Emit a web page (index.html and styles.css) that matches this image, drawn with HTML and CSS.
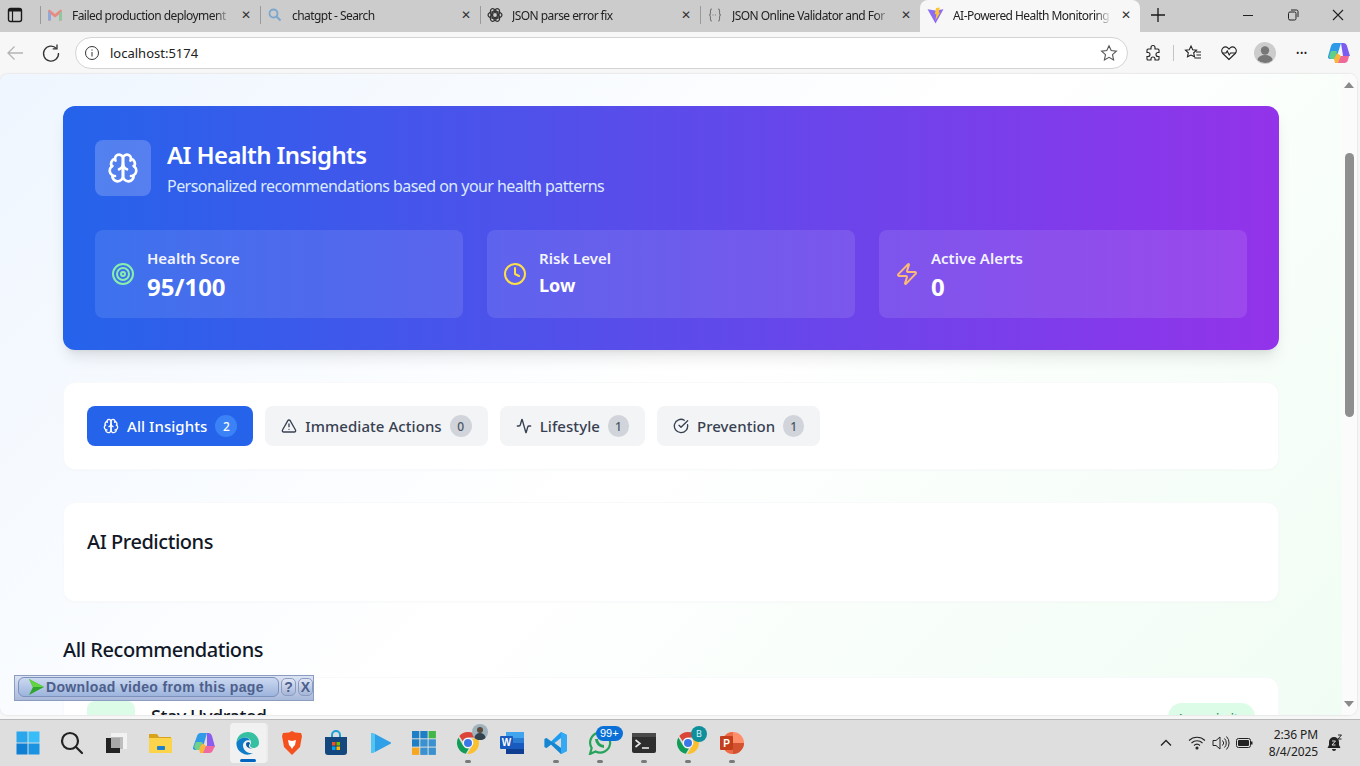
FILE: index.html
```html
<!DOCTYPE html>
<html lang="en">
<head>
    <meta charset="UTF-8">
    <meta name="viewport" content="width=device-width, initial-scale=1.0">
    <title>AI-Powered Health Monitoring</title>
    <link rel="stylesheet" href="styles.css">
</head>
<body>
    <svg class="defs" width="0" height="0">
        <symbol id="brain" viewBox="0 0 24 24">
            <path d="M12 5a3 3 0 1 0-5.997.125 4 4 0 0 0-2.526 5.77 4 4 0 0 0 .556 6.588A4 4 0 1 0 12 18Z"/>
            <path d="M12 5a3 3 0 1 1 5.997.125 4 4 0 0 1 2.526 5.77 4 4 0 0 1-.556 6.588A4 4 0 1 1 12 18Z"/>
            <path d="M15 13a4.5 4.5 0 0 1-3-4 4.5 4.5 0 0 1-3 4"/>
            <path d="M17.599 6.5a3 3 0 0 0 .399-1.375"/>
            <path d="M6.003 5.125A3 3 0 0 0 6.401 6.5"/>
            <path d="M3.477 10.896a4 4 0 0 1 .585-.396"/>
            <path d="M19.938 10.5a4 4 0 0 1 .585.396"/>
            <path d="M6 18a4 4 0 0 1-1.967-.516"/>
            <path d="M19.967 17.484A4 4 0 0 1 18 18"/>
        </symbol>
        <symbol id="chrome" viewBox="0 0 24 24">
            <path fill="#db4437" d="M12 1a11 11 0 0 1 9.5 5.5H12a5.5 5.5 0 0 0-5.2 3.7L3.3 5.1A11 11 0 0 1 12 1z"/>
            <path fill="#0f9d58" d="M2.4 6.6l4.6 8a5.5 5.5 0 0 0 5.9 2.8L9.8 22.8A11 11 0 0 1 2.4 6.6z"/>
            <path fill="#fbc02d" d="M22 7.5a11 11 0 0 1-10.7 15.5l4.7-7.9a5.5 5.5 0 0 0 .1-7.6z"/>
            <circle cx="12" cy="12" r="5" fill="#fff"/>
            <circle cx="12" cy="12" r="4" fill="#3b78e7"/>
        </symbol>
    </svg>

    <div class="tabstrip">
        <svg class="strip-icon" width="16" height="16" viewBox="0 0 16 16"><rect x="1.500" y="1.500" width="13" height="13" rx="2" fill="none" stroke="#1a1a1a" stroke-width="1.400"/><rect x="2" y="2" width="12" height="2.500" fill="#1a1a1a"/><path d="M5.500 4v10" stroke="#1a1a1a" stroke-width="1.200"/></svg>
        <div class="tab">
            <svg class="favicon" viewBox="0 0 16 16"><path d="M1 3.500v10h3V7.500l4 3 4-3v6h3v-10l-1.500-1L8 7 2.500 2.500z" fill="#ea8a80"/><path d="M1 3.500v10h3V7z" fill="#90a9d8"/><path d="M12 7v6.500h3V3.500z" fill="#8fc79f"/></svg>
            <span class="tab-title">Failed production deployment</span>
            <span class="tab-close">✕</span>
        </div>
        <div class="tab">
            <svg class="favicon" viewBox="0 0 16 16"><circle cx="6.500" cy="6.500" r="4" fill="none" stroke="#7ba7cf" stroke-width="1.800"/><path d="M9.500 9.500L13.500 13.500" stroke="#7ba7cf" stroke-width="2"/></svg>
            <span class="tab-title">chatgpt - Search</span>
            <span class="tab-close">✕</span>
        </div>
        <div class="tab">
            <svg class="favicon" viewBox="0 0 16 16" fill="none" stroke="#333" stroke-width="1.200"><circle cx="8" cy="8" r="2.500"/><ellipse cx="8" cy="8" rx="7" ry="3.500"/><ellipse cx="8" cy="8" rx="7" ry="3.500" transform="rotate(60 8 8)"/><ellipse cx="8" cy="8" rx="7" ry="3.500" transform="rotate(120 8 8)"/></svg>
            <span class="tab-title">JSON parse error fix</span>
            <span class="tab-close">✕</span>
        </div>
        <div class="tab">
            <svg class="favicon" viewBox="0 0 16 16" fill="none" stroke="#777" stroke-width="1.100"><path d="M5 2C3 2 3.500 4 3.500 6S2 8 2 8s1.500 0 1.500 2S3 14 5 14M11 2c2 0 1.500 2 1.500 4S14 8 14 8s-1.500 0-1.500 2 .5 4-1.500 4"/><path d="M5.500 8h5" stroke-dasharray="1 1.500"/></svg>
            <span class="tab-title">JSON Online Validator and For</span>
            <span class="tab-close">✕</span>
        </div>
        <div class="tab tab-active">
            <svg class="favicon favicon-big" viewBox="0 0 16 16"><path d="M0.500 2L8 15.500 15.500 2 8 3.200z" fill="#8d6cf5"/><path d="M8.500 1l3.500-.5-1 5 1.500-.5L8 12.500l.8-6-1.500.4z" fill="#ffc52e"/></svg>
            <span class="tab-title">AI-Powered Health Monitoring</span>
            <span class="tab-close tab-close-dark">✕</span>
        </div>
        <svg class="new-tab" width="16" height="16" viewBox="0 0 16 16"><path d="M8 1v14M1 8h14" stroke="#1a1a1a" stroke-width="1.300"/></svg>
        <div class="window-controls">
            <svg width="12" height="12" viewBox="0 0 12 12"><path d="M1 6.500h10" stroke="#222"/></svg>
            <svg width="12" height="12" viewBox="0 0 12 12" fill="none" stroke="#222"><rect x="1.500" y="3" width="7.500" height="8" rx="1.500"/><path d="M4 1h5.500a1.500 1.500 0 0 1 1.500 1.500V8"/></svg>
            <svg width="12" height="12" viewBox="0 0 12 12"><path d="M1 1l10 10M11 1L1 11" stroke="#222" stroke-width="1.100"/></svg>
        </div>
    </div>

    <div class="toolbar">
        <svg class="nav-icon" viewBox="0 0 20 20" fill="none" stroke="#b4b4b4" stroke-width="1.300"><path d="M18 10H3M9.500 3.500L3 10l6.500 6.500"/></svg>
        <svg class="nav-icon reload" viewBox="0 0 20 20" fill="none" stroke="#333" stroke-width="1.300"><path d="M15.500 5.500A7.500 7.500 0 1 0 17.500 10"/><path d="M16 1.500v4.300h-4.300"/></svg>
        <div class="address-bar">
            <svg width="16" height="16" viewBox="0 0 16 16" fill="none" stroke="#333"><circle cx="8" cy="8" r="6.500"/><path d="M8 7v4.500M8 4.500v1.200"/></svg>
            <span class="url">localhost:5174</span>
            <svg class="star" width="18" height="18" viewBox="0 0 18 18" fill="none" stroke="#555" stroke-width="1.100"><path d="M9 1.800l2.200 4.800 5.200.6-3.900 3.500 1.100 5.200L9 13.300l-4.600 2.600 1.100-5.200-3.900-3.500 5.200-.6z"/></svg>
        </div>
        <div class="toolbar-icons">
            <svg width="18" height="18" viewBox="0 0 18 18" fill="none" stroke="#222" stroke-width="1.100"><path d="M7 3.500a2 2 0 0 1 4 0V5h3a1 1 0 0 1 1 1v2.500h-1a2 2 0 0 0 0 4h1V15a1 1 0 0 1-1 1h-3v-1a2 2 0 0 0-4 0v1H4a1 1 0 0 1-1-1v-2.500h1a2 2 0 0 0 0-4H3V6a1 1 0 0 1 1-1h3z"/></svg>
            <span class="toolbar-sep"></span>
            <svg class="after-sep" width="18" height="18" viewBox="0 0 18 18" fill="none" stroke="#222" stroke-width="1.100"><path d="M7 2l1.700 3.800 3.800.4-2.800 2.600.8 4L7 11 3.500 12.800l.8-4L1.500 6.200l3.800-.4zM12 8h5M12.500 11h4.500M10.500 14h6.500"/></svg>
            <svg width="18" height="18" viewBox="0 0 18 18" fill="none" stroke="#222" stroke-width="1.100"><path d="M9 15.500L2.800 9.500a3.700 3.700 0 0 1 0-5.300 3.800 3.800 0 0 1 5.300 0l.9.900.900-.9a3.800 3.800 0 0 1 5.300 0 3.700 3.700 0 0 1 0 5.300z"/><path d="M2.500 9h3.500l1.200-2 2 4 1.300-2h5"/></svg>
            <svg class="avatar" width="22" height="22" viewBox="0 0 22 22"><circle cx="11" cy="11" r="11" fill="#ccc"/><circle cx="11" cy="8.500" r="4.200" fill="#777"/><path d="M3.500 18a7.500 5 0 0 1 15 0 11 11 0 0 1-15 0z" fill="#777"/></svg>
            <span class="dots">•••</span>
            <svg class="copilot" width="24" height="24" viewBox="0 0 24 24"><path d="M7 2h7l-4 13a4 4 0 0 1-4 3H3a2 2 0 0 1-2-2.500L4 5a4 4 0 0 1 3-3z" fill="#2f9be8"/><path d="M14 2h2a4 4 0 0 1 4 3l3 10h-7z" fill="#7c5cf0"/><path d="M9 22h8a4 4 0 0 0 4-3l1-4h-9l-2 5z" fill="#f0679a"/><path d="M2 16l2-6h6l-2 8H4z" fill="#5ed08b"/><path d="M7 18l3-6 4 3-3 7H8z" fill="#f6b73c"/></svg>
        </div>
    </div>

    <div class="viewport">
        <main class="page">
            <div class="container">
                <section class="hero">
                    <div class="hero-head">
                        <div class="hero-icon">
                            <svg class="lucide" width="32" height="32"><use href="#brain"/></svg>
                        </div>
                        <div>
                            <h1>AI Health Insights</h1>
                            <p>Personalized recommendations based on your health patterns</p>
                        </div>
                    </div>
                    <div class="stats">
                        <div class="stat">
                            <svg class="lucide stat-green" width="24" height="24" viewBox="0 0 24 24"><circle cx="12" cy="12" r="10"/><circle cx="12" cy="12" r="6"/><circle cx="12" cy="12" r="2"/></svg>
                            <div>
                                <div class="stat-label">Health Score</div>
                                <div class="stat-value">95/100</div>
                            </div>
                        </div>
                        <div class="stat">
                            <svg class="lucide stat-yellow" width="24" height="24" viewBox="0 0 24 24"><circle cx="12" cy="12" r="10"/><path d="M12 6v6l4 2"/></svg>
                            <div>
                                <div class="stat-label">Risk Level</div>
                                <div class="stat-value stat-value-small">Low</div>
                            </div>
                        </div>
                        <div class="stat">
                            <svg class="lucide stat-orange" width="24" height="24" viewBox="0 0 24 24"><path d="M4 14a1 1 0 0 1-.78-1.630l9.900-10.200a.5.5 0 0 1 .86.46l-1.920 6.020A1 1 0 0 0 13 10h7a1 1 0 0 1 .78 1.630l-9.900 10.200a.5.5 0 0 1-.86-.46l1.920-6.020A1 1 0 0 0 11 14z"/></svg>
                            <div>
                                <div class="stat-label">Active Alerts</div>
                                <div class="stat-value">0</div>
                            </div>
                        </div>
                    </div>
                </section>

                <section class="card filters">
                    <button class="filter filter-active">
                        <svg class="lucide" width="16" height="16"><use href="#brain"/></svg>
                        All Insights
                        <span class="count">2</span>
                    </button>
                    <button class="filter">
                        <svg class="lucide" width="16" height="16" viewBox="0 0 24 24"><path d="m21.730 18-8-14a2 2 0 0 0-3.480 0l-8 14A2 2 0 0 0 4 21h16a2 2 0 0 0 1.730-3"/><path d="M12 9v4"/><path d="M12 17h.01"/></svg>
                        Immediate Actions
                        <span class="count">0</span>
                    </button>
                    <button class="filter">
                        <svg class="lucide" width="16" height="16" viewBox="0 0 24 24"><path d="M22 12h-2.480a2 2 0 0 0-1.930 1.460l-2.350 8.360a.25.25 0 0 1-.48 0L9.240 2.180a.25.25 0 0 0-.48 0l-2.350 8.360A2 2 0 0 1 4.490 12H2"/></svg>
                        Lifestyle
                        <span class="count count-one">1</span>
                    </button>
                    <button class="filter">
                        <svg class="lucide" width="16" height="16" viewBox="0 0 24 24"><path d="M21.801 10A10 10 0 1 1 17 3.335"/><path d="m9 11 3 3L22 4"/></svg>
                        Prevention
                        <span class="count count-one">1</span>
                    </button>
                </section>

                <section class="card predictions">
                    <h2>AI Predictions</h2>
                </section>

                <h2 class="section-title">All Recommendations</h2>

                <section class="card recommendation">
                    <div class="rec-icon"></div>
                    <h3>Stay Hydrated</h3>
                    <span class="priority">Low priority</span>
                </section>
            </div>
        </main>
        <div class="scrollbar">
            <span class="arrow-up"></span>
            <span class="thumb"></span>
            <span class="arrow-down"></span>
        </div>

        <div class="video-bar">
            <div class="video-btn">
                <svg width="17" height="16" viewBox="0 0 17 16"><path d="M1 0l15 8-15 8 4-8z" fill="#2fa52f"/><path d="M1 0l15 8H5z" fill="#62d43f"/></svg>
                Download video from this page
            </div>
            <span class="video-mini">?</span>
            <span class="video-mini">X</span>
        </div>
    </div>

    <footer class="taskbar">
        <div class="task-apps">
            <div class="task-app">
                <svg width="24" height="24" viewBox="0 0 24 24"><rect x="0.500" y="0.500" width="11" height="11" fill="#2aa6ec"/><rect x="12.500" y="0.500" width="11" height="11" fill="#38bdf8"/><rect x="0.500" y="12.500" width="11" height="11" fill="#0f7fd4"/><rect x="12.500" y="12.500" width="11" height="11" fill="#1a93e2"/></svg>
            </div>
            <div class="task-app">
                <svg width="24" height="24" viewBox="0 0 24 24" fill="none" stroke="#222" stroke-width="2.200"><circle cx="10" cy="10" r="8"/><path d="M16 16l6 6" stroke-linecap="round"/></svg>
            </div>
            <div class="task-app">
                <svg width="24" height="24" viewBox="0 0 24 24"><rect x="7" y="2" width="16" height="16" fill="#f2f2f2"/><rect x="7" y="6" width="12" height="12" fill="#bdbdbd"/><rect x="2" y="7" width="14" height="15" fill="#222"/><path d="M7 7h9v10H7z" fill="#a8a8a8"/></svg>
            </div>
            <div class="task-app">
                <svg width="24" height="24" viewBox="0 0 24 24"><path d="M1 3h8l2 3h12v5H1z" fill="#d9a21b"/><rect x="1" y="7" width="23" height="15" fill="#fbd44c"/><rect x="9" y="15" width="8" height="4" rx="1" fill="#1c7fd0"/></svg>
            </div>
            <div class="task-app">
                <svg width="24" height="24" viewBox="0 0 24 24"><path d="M8 2h7l-4 14a4 4 0 0 1-4 3H3a2 2 0 0 1-2-2.500L5 5a4 4 0 0 1 3-3z" fill="#2f9be8"/><path d="M15 2h2a4 4 0 0 1 3 3l3 11h-8z" fill="#8b5cf0"/><path d="M9 22h8a4 4 0 0 0 4-3l2-4H13l-2 5z" fill="#ef6aa0"/><path d="M2 16l2-5h6l-2 8H4z" fill="#6fd18a"/><path d="M7 18l3-6 4 3-3 7H8z" fill="#f6b73c"/></svg>
            </div>
            <div class="task-app task-app-open">
                <svg width="24" height="24" viewBox="0 0 24 24"><path d="M12 1a11 11 0 0 1 11 11c0 3-2.500 5-5.500 5-2 0-3.500-1-3.500-2.500 0-1 1-1.500 1-3 0-3-3-5-6-5-4 0-7 2.500-8.500 5A11 11 0 0 1 12 1z" fill="#35c1a1"/><path d="M.5 11.500C2 9 5 6.500 9 6.500c2 0 4 1 5 3-3-1-7 1-7 5 0 4 4 8.500 10 7.500a11 11 0 0 1-16.500-10.500z" fill="#0f7cc9"/><path d="M10 13c0 3 3 5 7 4.500-3 0-4-1-4-2.500s1-2 1-3c-1-2-4-1-4 1z" fill="#0b5aa6"/></svg>
                <span class="task-running"></span>
            </div>
            <div class="task-app">
                <svg width="24" height="26" viewBox="0 0 24 26"><path d="M12 1l3 1.500 6 .500 1 3-2 11-8 8-8-8-2-11 1-3 6-.500z" fill="#f4511e"/><path d="M8 10l4 1 4-1-1 5-1.500 1.500L12 19l-1.500-2.500L9 15z" fill="#fff"/></svg>
            </div>
            <div class="task-app">
                <svg width="24" height="26" viewBox="0 0 24 26"><path d="M8 7V5a4 4 0 0 1 8 0v2" fill="none" stroke="#18a0d7" stroke-width="2"/><path d="M1 7h22v15a3 3 0 0 1-3 3H4a3 3 0 0 1-3-3z" fill="#14477e"/><rect x="8" y="12" width="3.500" height="3.500" fill="#f25022"/><rect x="12.500" y="12" width="3.500" height="3.500" fill="#7fba00"/><rect x="8" y="16.500" width="3.500" height="3.500" fill="#00a4ef"/><rect x="12.500" y="16.500" width="3.500" height="3.500" fill="#ffb900"/></svg>
            </div>
            <div class="task-app">
                <svg width="24" height="24" viewBox="0 0 24 24"><path d="M3 2l4 1 15 8a1 1 0 0 1 0 2L7 21l-4 1z" fill="#2f9fe8"/><path d="M3 2l4 1v18l-4 1z" fill="#52c6f2"/></svg>
            </div>
            <div class="task-app">
                <svg width="24" height="24" viewBox="0 0 24 24"><rect width="7.300" height="7.300" fill="#1f7fc4"/><rect x="8.300" width="7.300" height="7.300" fill="#1f7fc4"/><rect x="16.600" width="7.300" height="7.300" fill="#43b649"/><rect y="8.300" width="7.300" height="7.300" fill="#1f7fc4"/><rect x="8.300" y="8.300" width="7.300" height="7.300" fill="#3a91d0"/><rect x="16.600" y="8.300" width="7.300" height="7.300" fill="#3a91d0"/><rect y="16.600" width="7.300" height="7.300" fill="#f5a623"/><rect x="8.300" y="16.600" width="7.300" height="7.300" fill="#3a91d0"/><rect x="16.600" y="16.600" width="7.300" height="7.300" fill="#3a91d0"/></svg>
            </div>
            <div class="task-app">
                <svg width="24" height="24"><use href="#chrome"/></svg>
                <svg class="task-badge-photo" width="16" height="16" viewBox="0 0 16 16"><circle cx="8" cy="8" r="8" fill="#9fb3bf"/><circle cx="8" cy="6" r="3" fill="#5d4a3c"/><path d="M2.500 14a5.500 5 0 0 1 11 0 8 8 0 0 1-11 0z" fill="#33424f"/></svg>
                <span class="task-dot"></span>
            </div>
            <div class="task-app">
                <svg width="24" height="24" viewBox="0 0 24 24"><rect x="6" y="1" width="18" height="22" rx="1" fill="#2b7cd3"/><rect x="6" y="1" width="18" height="6" fill="#41a5ee"/><rect x="6" y="12" width="18" height="6" fill="#185abd"/><rect x="6" y="18" width="18" height="5" fill="#103f91"/><rect y="5" width="13" height="13" rx="1" fill="#185abd"/><text class="word-w" x="6.500" y="15" text-anchor="middle">W</text></svg>
            </div>
            <div class="task-app">
                <svg width="24" height="24" viewBox="0 0 24 24"><path d="M17 1l6 3v16l-6 3-10-9.500L2.500 17 .5 16v-8l2-1L7 10.500z" fill="#1f9cf0"/><path d="M17 7l-6.500 5 6.500 5z" fill="#d9d9d9"/><path d="M17 1l6 3v16l-6 3z" fill="#35a9f4"/><path d="M.5 8l2-1L17 17v6L7 13.500 2.500 17 .5 16z" fill="#0f74ba" opacity=".55"/></svg>
                <span class="task-dot"></span>
            </div>
            <div class="task-app">
                <svg width="24" height="24" viewBox="0 0 24 24" fill="none" stroke="#25a35a" stroke-width="2.200"><path d="M2 23l1.700-6A10 10 0 1 1 7.500 20.500z"/><path d="M8.500 8c0 4 3.500 7.500 7.500 7.500" stroke-width="3"/></svg>
                <span class="task-badge">99+</span>
                <span class="task-dot"></span>
            </div>
            <div class="task-app">
                <svg width="24" height="20" viewBox="0 0 24 20"><rect width="24" height="20" rx="2" fill="#2e2e2e"/><rect width="24" height="4" fill="#4a4a4a"/><path d="M3.500 7l4.500 3.500-4.500 3.500" fill="none" stroke="#e5e5e5" stroke-width="1.600"/><path d="M10 15h7" stroke="#e5e5e5" stroke-width="1.600"/></svg>
                <span class="task-dot"></span>
            </div>
            <div class="task-app">
                <svg width="24" height="24"><use href="#chrome"/></svg>
                <span class="task-badge-b">B</span>
                <span class="task-dot"></span>
            </div>
            <div class="task-app">
                <svg width="24" height="24" viewBox="0 0 24 24"><circle cx="13" cy="12" r="11" fill="#ff8f6b"/><path d="M13 12h11a11 11 0 0 1-11 11z" fill="#d35230"/><path d="M13 1v22a11 11 0 0 1-9-5V6a11 11 0 0 1 9-5z" fill="#ed6c47"/><rect y="5" width="13" height="14" rx="1" fill="#c43e1c"/><text class="word-w" x="6.500" y="16" text-anchor="middle">P</text></svg>
                <span class="task-dot"></span>
            </div>
        </div>
        <div class="tray">
            <svg class="tray-caret" width="14" height="14" viewBox="0 0 14 14" fill="none" stroke="#222" stroke-width="1.300"><path d="M2 9.500l5-5 5 5"/></svg>
            <svg width="18" height="16" viewBox="0 0 18 16" fill="none" stroke="#222" stroke-width="1.100"><path d="M1 5.500a11.500 11.500 0 0 1 16 0M3.500 8a8 8 0 0 1 11 0M6 10.500a4.500 4.500 0 0 1 6 0"/><circle cx="9" cy="13" r="1" fill="#222"/></svg>
            <svg width="18" height="16" viewBox="0 0 18 16" fill="none" stroke="#222" stroke-width="1"><path d="M1 5.500h3L8 2v12L4 10.500H1zM10.500 5.500a3.500 3.500 0 0 1 0 5M12.500 3.500a6.500 6.500 0 0 1 0 9M14.500 1.500a9.500 9.500 0 0 1 0 13"/></svg>
            <svg width="17" height="12" viewBox="0 0 17 12"><rect x="0.500" y="1.500" width="14" height="9" rx="2" fill="none" stroke="#222"/><rect x="2" y="3" width="11" height="6" rx="1" fill="#222"/><rect x="15" y="4.500" width="1.500" height="3" fill="#222"/></svg>
            <div class="clock">
                <div>2:36 PM</div>
                <div>8/4/2025</div>
            </div>
            <svg class="bell" width="16" height="18" viewBox="0 0 16 18"><path d="M7 3a5 5 0 0 0-5 5v3l-1.500 3h13L12 11V8a5 5 0 0 0-5-5zM5 15a2 2 0 0 0 4 0z" fill="#222"/><path d="M5 7h3.500L5 11h3.500" fill="none" stroke="#ddd"/><path d="M11 1h3.500L11 5h3.500" fill="none" stroke="#222"/></svg>
        </div>
    </footer>
</body>
</html>
```

FILE: styles.css
```css
* {
    box-sizing: border-box;
}

body {
    margin: 0;
    width: 1360px;
    height: 766px;
    overflow: hidden;
    display: flex;
    flex-direction: column;
    font-family: "Noto Sans", "Open Sans", sans-serif;
    background: #f7f7f7;
    color: #111827;
}

.defs {
    position: absolute;
}

/* browser tabs */
.tabstrip {
    height: 32px;
    flex: none;
    display: flex;
    align-items: center;
    background: #cccccc;
    font-size: 12px;
    color: #222;
}

.strip-icon {
    margin: 0 17px 2px 7px;
    flex: none;
}

.tab {
    width: 220px;
    height: 32px;
    flex: none;
    display: flex;
    align-items: center;
    gap: 9px;
    padding: 0 8px 2px 7px;
    position: relative;
}

.tab::before {
    content: "";
    position: absolute;
    left: 0;
    top: 6px;
    bottom: 8px;
    border-left: 1px solid #9a9a9a;
}

.tab-active {
    background: #f7f7f7;
    border-radius: 8px 8px 0 0;
}

.tab-active::before {
    display: none;
}

.favicon {
    width: 16px;
    height: 16px;
    flex: none;
}

.favicon-big {
    width: 17px;
    height: 17px;
}

.tab-title {
    flex: 1;
    white-space: nowrap;
    overflow: hidden;
    letter-spacing: -0.55px;
    -webkit-mask-image: linear-gradient(to right, #000 90%, transparent);
    mask-image: linear-gradient(to right, #000 90%, transparent);
}

.tab-close {
    width: 12px;
    font-size: 12px;
    text-align: center;
    color: #333;
    flex: none;
    font-family: "DejaVu Sans", sans-serif;
}

.new-tab {
    margin: 0 0 2px 10px;
    flex: none;
}

.window-controls {
    margin: 0 0 2px auto;
    display: flex;
    gap: 33px;
    padding-right: 16px;
}

/* address bar row */
.toolbar {
    height: 42px;
    flex: none;
    display: flex;
    align-items: center;
    padding: 0 8px 1px 5px;
    background: #f7f7f7;
}

.nav-icon {
    width: 20px;
    height: 20px;
    flex: none;
}

.reload {
    margin-left: 16px;
}

.address-bar {
    width: 1053px;
    height: 32px;
    margin-left: 14px;
    display: flex;
    align-items: center;
    gap: 10px;
    padding: 0 9px 0 8px;
    background: #fff;
    border: 1px solid #d4d4d4;
    border-radius: 16px;
}

.url {
    font-size: 13px;
    color: #222;
}

.star {
    margin-left: auto;
}

.toolbar-icons {
    display: flex;
    align-items: center;
    margin-left: 16px;
}

.toolbar-sep {
    height: 16px;
    border-left: 1px solid #c4c4c4;
    margin: 0 10px 0 11px;
}

.toolbar-icons svg + svg {
    margin-left: 18px;
}

.toolbar-icons .avatar {
    margin-left: 16px;
}

.dots {
    margin-left: 20px;
    font-size: 9px;
    letter-spacing: 0.5px;
    color: #222;
    width: 21px;
}

.copilot {
    margin-left: 10px;
}

/* page area */
.viewport {
    flex: none;
    width: 1357px;
    height: 641px;
    display: flex;
    position: relative;
    overflow: hidden;
    border-radius: 8px;
    background: linear-gradient(135deg, #eff6ff 0%, #ffffff 50%, #f0fdf4 100%);
    box-shadow: 0 0 2px rgba(0, 0, 0, 0.18);
}

.page {
    flex: 1;
    min-width: 0;
    overflow: hidden;
}

.container {
    max-width: 1280px;
    margin: 0 auto;
    padding: 32px;
}

.hero {
    padding: 34px 32px 32px;
    border-radius: 12px;
    color: #fff;
    background: linear-gradient(to right, #2563eb, #9333ea);
    box-shadow: 0 10px 15px -3px rgba(0, 0, 0, 0.1), 0 4px 6px -4px rgba(0, 0, 0, 0.1);
}

.hero-head {
    height: 56px;
    display: flex;
    align-items: center;
    gap: 16px;
    margin-bottom: 34px;
}

.hero-icon {
    width: 56px;
    height: 56px;
    display: flex;
    align-items: center;
    justify-content: center;
    border-radius: 8px;
    background: rgba(255, 255, 255, 0.2);
}

.lucide {
    fill: none;
    stroke: currentColor;
    stroke-width: 2;
    stroke-linecap: round;
    stroke-linejoin: round;
    flex: none;
}

h1 {
    margin: 0;
    font-size: 24px;
    line-height: 32px;
    font-weight: 600;
    letter-spacing: -0.6px;
}

.hero p {
    margin: 3px 0 0;
    font-size: 16px;
    line-height: 24px;
    letter-spacing: -0.55px;
    color: #dbeafe;
}

.stats {
    display: grid;
    grid-template-columns: repeat(3, 1fr);
    gap: 24px;
}

.stat {
    height: 88px;
    display: flex;
    align-items: center;
    gap: 12px;
    padding: 16px;
    border-radius: 8px;
    background: rgba(255, 255, 255, 0.1);
}

.stat-green {
    color: #86efac;
}

.stat-yellow {
    color: #fde047;
}

.stat-orange {
    color: #fdba74;
}

.stat-label {
    font-size: 15px;
    line-height: 20px;
    font-weight: 600;
    color: #f3f4ff;
}

.stat-value {
    margin: 3px 0 -3px;
    font-size: 24px;
    line-height: 32px;
    font-weight: 700;
}

.stat-value-small {
    margin: 1px 0 -1px;
    font-size: 18px;
}

.card {
    background: #fff;
    border: 1px solid #f8f9fb;
    border-radius: 12px;
    box-shadow: 0 1px 2px rgba(0, 0, 0, 0.02);
}

.filters {
    margin-top: 32px;
    padding: 23px;
    display: flex;
    gap: 12px;
}

.filter {
    height: 40px;
    display: flex;
    align-items: center;
    gap: 8px;
    padding: 0 16px;
    border: none;
    border-radius: 8px;
    background: #f3f4f6;
    color: #374151;
    font-family: inherit;
    font-size: 15px;
    font-weight: 500;
    letter-spacing: 0.06px;
}

.filter-active {
    background: #2563eb;
    color: #fff;
}

.count {
    width: 22px;
    height: 22px;
    display: flex;
    align-items: center;
    justify-content: center;
    border-radius: 11px;
    background: #d1d5db;
    color: #4b5563;
    font-size: 12px;
}

.count-one {
    width: 21px;
}

.filter-active .count {
    background: #3b82f6;
    color: #fff;
}

.predictions {
    margin-top: 32px;
    height: 100px;
    padding: 25px 23px;
}

h2 {
    margin: 0;
    font-size: 20px;
    line-height: 28px;
    font-weight: 500;
    letter-spacing: -0.45px;
}

.section-title {
    margin-top: 34px;
}

.recommendation {
    margin-top: 13px;
    height: 120px;
    padding: 23px;
    display: flex;
    align-items: flex-start;
    gap: 16px;
}

.rec-icon {
    width: 48px;
    height: 48px;
    border-radius: 8px;
    background: #dcfce7;
}

h3 {
    margin: 1px 0 0;
    flex: 1;
    font-size: 18px;
    line-height: 28px;
    font-weight: 500;
    letter-spacing: -0.45px;
}

.priority {
    margin-top: 2px;
    padding: 6px 11px 2px;
    border-radius: 14px;
    background: #dcfce7;
    color: #15803d;
    font-size: 12px;
    line-height: 20px;
    font-weight: 500;
    letter-spacing: -0.3px;
}

/* page scrollbar */
.scrollbar {
    width: 15px;
    flex: none;
    display: flex;
    flex-direction: column;
    align-items: center;
    padding: 8px 1px 0 0;
    background: #fbfbfb;
}

.arrow-up {
    width: 0;
    height: 0;
    border: 5px solid transparent;
    border-top: 0;
    border-bottom: 6px solid #8a8a8a;
}

.thumb {
    width: 9px;
    height: 264px;
    margin-top: 65px;
    border-radius: 5px;
    background: #8f8f8f;
}

.arrow-down {
    width: 0;
    height: 0;
    margin-top: auto;
    margin-bottom: 8px;
    border: 5px solid transparent;
    border-bottom: 0;
    border-top: 6px solid #8a8a8a;
}

/* video downloader extension bar */
.video-bar {
    position: absolute;
    left: 14px;
    top: 601px;
    width: 300px;
    height: 26px;
    display: flex;
    align-items: center;
    gap: 2px;
    padding: 0 0 2px 3px;
    background: linear-gradient(to bottom, #dbe3f3, #a9b9da);
    border: 1px solid #8c9cc0;
    font-family: "Liberation Sans", Arial, sans-serif;
    font-size: 14px;
    font-weight: 700;
    color: #4d5f8c;
}

.video-btn {
    width: 261px;
    height: 20px;
    display: flex;
    align-items: center;
    gap: 1px;
    padding-left: 9px;
    border: 1px solid #7e90bc;
    border-radius: 6px;
    background: linear-gradient(to bottom, #cbd8f0, #9db4dc);
    letter-spacing: 0.35px;
}

.video-mini {
    width: 15px;
    height: 18px;
    display: flex;
    align-items: center;
    justify-content: center;
    border: 1px solid #8c9cc0;
    border-radius: 5px;
    background: linear-gradient(to bottom, #dfe6f5, #a4b5d8);
}

/* windows taskbar */
.taskbar {
    margin-top: 4px;
    flex: 1;
    display: flex;
    align-items: center;
    justify-content: space-between;
    padding: 0 17px 0 6px;
    background: #dedede;
    border-top: 1px solid #b9b9b9;
}

.task-apps {
    display: flex;
}

.task-app {
    width: 44px;
    height: 40px;
    display: flex;
    align-items: center;
    justify-content: center;
    position: relative;
}

.task-app-open {
    width: 36px;
    margin: 0 4px;
    border-radius: 4px;
    background: #f1f1f1;
    box-shadow: 2px 0 0 #ececec;
}

.task-running {
    position: absolute;
    left: 10px;
    bottom: 1px;
    width: 16px;
    height: 3px;
    border-radius: 2px;
    background: #0067c0;
}

.task-dot {
    position: absolute;
    left: 19px;
    bottom: 0;
    width: 6px;
    height: 3px;
    border-radius: 2px;
    background: #7a7a7a;
}

.task-badge-photo {
    position: absolute;
    top: 1px;
    right: 2px;
}

.task-badge {
    position: absolute;
    top: 3px;
    left: 18px;
    padding: 0 4px;
    border-radius: 8px;
    background: #0a6fd6;
    color: #fff;
    font-size: 11px;
    line-height: 15px;
    font-family: "Liberation Sans", Arial, sans-serif;
}

.task-badge-b {
    position: absolute;
    top: 3px;
    right: 3px;
    width: 16px;
    height: 16px;
    border-radius: 50%;
    background: #0f8f9c;
    color: #d8f4f4;
    font-size: 9px;
    line-height: 16px;
    text-align: center;
}

.word-w {
    fill: #fff;
    font-family: "Liberation Sans", Arial, sans-serif;
    font-size: 10px;
    font-weight: 700;
}

.tray {
    display: flex;
    align-items: center;
    gap: 6px;
    color: #222;
}

.tray-caret {
    margin-right: 9px;
}

.clock {
    margin-left: 10px;
    text-align: right;
    font-size: 12px;
    line-height: 17px;
    letter-spacing: -0.1px;
}

.bell {
    margin-left: 3px;
}
```
